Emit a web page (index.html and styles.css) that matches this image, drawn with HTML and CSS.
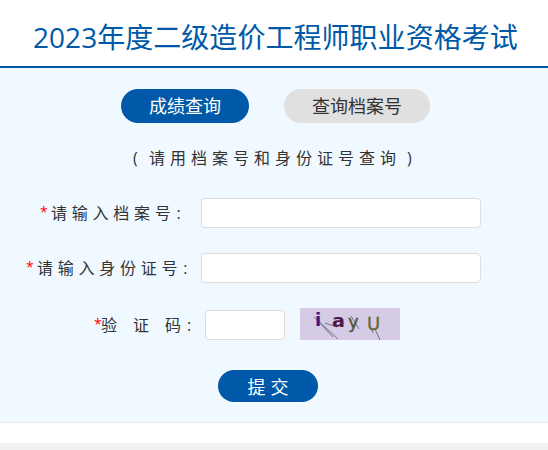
FILE: index.html
```
<!DOCTYPE html>
<html lang="zh-CN">
<head>
<meta charset="utf-8">
<title>成绩查询</title>
<link rel="stylesheet" href="styles.css">
</head>
<body>
<header class="header"><h1 class="title">2023年度二级造价工程师职业资格考试</h1></header>
<main class="panel">
  <nav class="tabs">
    <a class="tab tab-active">成绩查询</a>
    <a class="tab">查询档案号</a>
  </nav>
  <p class="hint"><span class="open">(</span>请用档案号和身份证号查询<span class="close">)</span></p>
  <form class="form">
    <div class="row">
      <label class="label label-file" for="file"><span class="star">*</span>请输入档案号<span class="colon">:</span></label>
      <input class="input" id="file" type="text">
    </div>
    <div class="row">
      <label class="label label-id" for="idno"><span class="star">*</span>请输入身份证号<span class="colon">:</span></label>
      <input class="input" id="idno" type="text">
    </div>
    <div class="row row-code">
      <label class="label label-code" for="code"><span class="star">*</span><span class="spread"><span>验</span><span>证</span><span>码</span></span><span class="colon">:</span></label>
      <input class="input input-code" id="code" type="text">
      <svg class="captcha" width="100" height="32" viewBox="0 0 100 32">
        <rect width="100" height="32" fill="#d5cbe7"/>
        <g fill="none" stroke="#77718a" stroke-width="1">
          <path d="M14 9L38 31M18 13L33 29M25 15L37 19M51 8L59 21M71 20L73 25M75 21L80 32"/>
        </g>
        <g class="captcha-text">
          <text x="15" y="18" fill="#49127f">i</text>
          <text x="32" y="19" fill="#4c1647" textLength="13" lengthAdjust="spacingAndGlyphs">a</text>
          <text x="48" y="20" fill="#455339" class="thin">y</text>
          <text x="67" y="22" fill="#697032" class="thin">U</text>
        </g>
      </svg>
    </div>
    <button class="submit" type="button">提交</button>
  </form>
</main>
<footer class="footer"></footer>
</body>
</html>
```
FILE: styles.css
```
* { box-sizing: border-box; }
body {
  margin: 0;
  height: 450px;
  overflow: hidden;
  background: #fff;
  color: #333;
  font-family: "Open Sans", "Noto Sans CJK SC", sans-serif;
  font-size: 16px;
}
.header {
  height: 68px;
  padding: 16px 0 0 33px;
  border-bottom: 2px solid #0059a8;
}
.title {
  margin: 0;
  color: #0059a8;
  font-size: 28px;
  font-weight: 400;
  line-height: 42px;
  letter-spacing: 0.04px;
  white-space: nowrap;
}
.panel {
  height: 355px;
  padding-top: 21px;
  background: #f0f9ff;
  border-bottom: 1px solid #e8e8e8;
}
.tabs {
  display: flex;
  gap: 35px;
  padding-left: 121px;
}
.tab {
  height: 34px;
  padding: 0 28px;
  border-radius: 17px;
  background: #e0e0e0;
  font-size: 18px;
  line-height: 34px;
}
.tab-active { background: #0059a8; color: #fff; }
.hint {
  margin: 23px 0 0;
  padding-left: 133px;
  line-height: 24px;
  letter-spacing: 5px;
  white-space: nowrap;
}
.open { display: inline-block; width: 16px; }
.close { padding-left: 6px; }
.form { margin-top: 28px; }
.row {
  display: flex;
  align-items: center;
  height: 30px;
  margin-bottom: 25px;
}
.label {
  display: flex;
  flex: none;
  line-height: 30px;
  letter-spacing: 4.75px;
  white-space: nowrap;
}
.label-file { width: 201px; padding-left: 39px; }
.label-id { width: 201px; padding-left: 25px; }
.label-code { width: 205px; padding-left: 94px; letter-spacing: 0; }
.star { width: 12px; padding-left: 1px; color: #f00; font-size: 14px; line-height: 28px; letter-spacing: 0; }
.label-code .star { width: 7px; padding-left: 0; }
.spread { display: flex; gap: 16px; }
.colon { padding-left: 1px; }
.label-code .colon { padding-left: 6px; }
.input {
  width: 280px;
  height: 30px;
  padding: 0 8px;
  border: 1px solid #ddd;
  border-radius: 4px;
  background: #fff;
}
.input-code { width: 80px; }
.row-code { height: 34px; margin: 0 0 28px; }
.captcha { flex: none; align-self: flex-start; margin-left: 15px; }
.captcha-text { font: bold 18px "DejaVu Sans", sans-serif; }
.captcha-text .thin { font-weight: 400; stroke: currentColor; stroke: #596333; stroke-width: 0.4; }
.submit {
  display: block;
  width: 100px;
  height: 32px;
  margin-left: 218px;
  padding: 0 0 0 5px;
  border: 0;
  border-radius: 16px;
  background: #0059a8;
  color: #fff;
  font: 18px/32px "Noto Sans CJK SC", sans-serif;
  letter-spacing: 5px;
}
.footer { height: 27px; border-bottom: 7px solid #f1f1f1; }
```
